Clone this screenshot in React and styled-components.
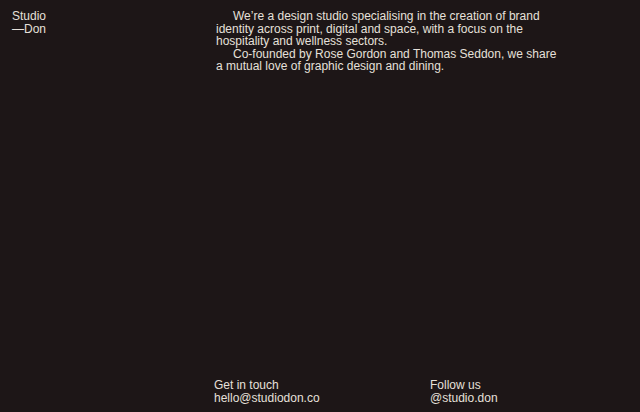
import React from "react";
import styled, { createGlobalStyle } from "styled-components";

const Global = createGlobalStyle`
  html, body { margin: 0; padding: 0; background: #1d1617; }
  body { font-family: "Liberation Sans", Arial, sans-serif; }
`;

const Page = styled.div`
  box-sizing: border-box;
  height: 412px;
  padding: 10px 12px 8px 12px;
  display: flex;
  flex-direction: column;
  justify-content: space-between;
  color: #e6e0da;
  font-size: 12px;
  line-height: 12.5px;
  -webkit-font-smoothing: antialiased;
`;

const Row = styled.div`
  display: grid;
  grid-template-columns: 202px 216px 1fr;
`;

const Logo = styled.div`
  grid-column: 1;
`;

const Intro = styled.div`
  grid-column: 2 / span 2;
  max-width: 348px;
  padding-left: ${(p) => p.$shift || 0}px;
`;

const Para = styled.p`
  margin: 0;
  text-indent: 17px;
`;

const Contact = styled.div`
  grid-column: ${(p) => p.$col};
`;

export default function App() {
  return (
    <>
      <Global />
      <Page>
        <Row>
          <Logo>
            Studio
            <br />
            —Don
          </Logo>
          <Intro $shift={2}>
            <Para>
              We’re a design studio specialising in the creation of brand identity across print,
              digital and space, with a focus on the hospitality and wellness sectors.
            </Para>
            <Para>
              Co-founded by Rose Gordon and Thomas Seddon, we share a mutual love of graphic
              design and dining.
            </Para>
          </Intro>
        </Row>
        <Row>
          <Contact $col={2}>
            Get in touch
            <br />
            hello@studiodon.co
          </Contact>
          <Contact $col={3}>
            Follow us
            <br />
            @studio.don
          </Contact>
        </Row>
      </Page>
    </>
  );
}
